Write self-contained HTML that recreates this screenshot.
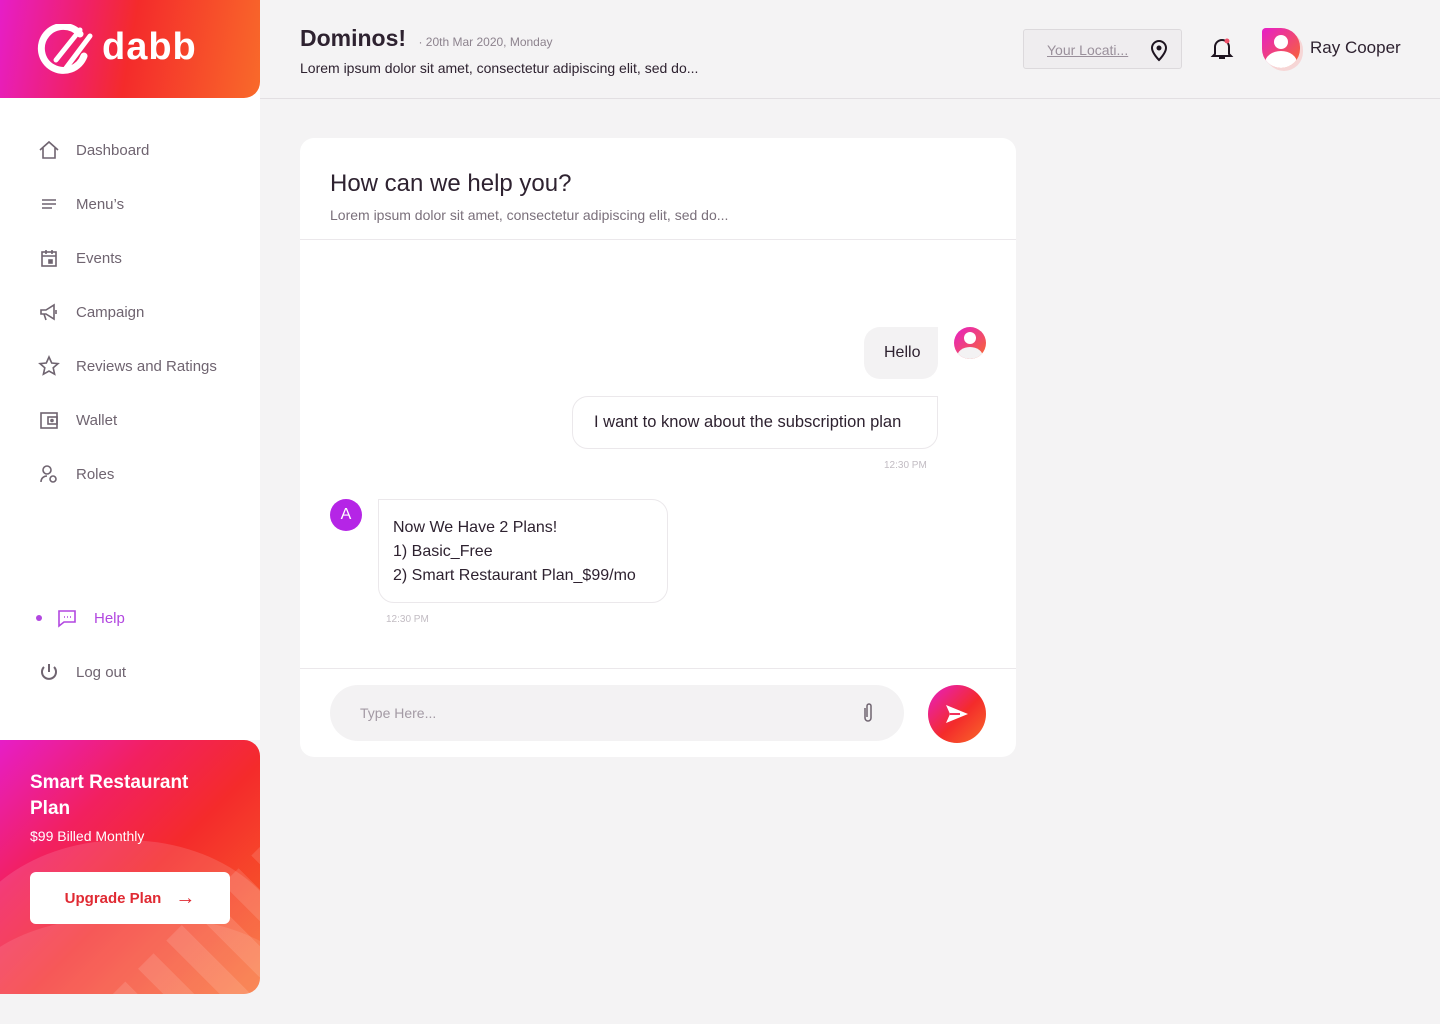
<!DOCTYPE html>
<html><head><meta charset="utf-8"><style>
*{box-sizing:border-box;margin:0;padding:0}
html,body{width:1440px;height:1024px;overflow:hidden}
body{background:#f4f3f4;font-family:"Liberation Sans",sans-serif;position:relative;color:#2e2230}
.side{position:absolute;left:0;top:0;width:260px;height:740px;background:#fff}
.logo{position:absolute;left:0;top:0;width:260px;height:98px;border-radius:0 0 16px 0;background:linear-gradient(100deg,#e61ec8 0%,#f0206c 30%,#f42b2b 50%,#f96a2a 100%)}
.logo span{position:absolute;left:102px;top:26px;color:#fff;font-weight:bold;font-size:38px;letter-spacing:1px}
.nav{position:absolute;left:38px;font-size:15px;color:#6f6470;display:flex;align-items:center}
.nav svg{width:22px;height:22px;margin-right:16px;fill:none;stroke:#6f6470;stroke-width:1.6}
.plan{position:absolute;left:0;top:740px;width:260px;height:254px;border-radius:0 16px 16px 0;overflow:hidden;background:linear-gradient(135deg,#e61ec8 0%,#f22060 30%,#f42b2b 55%,#f96a2a 100%)}
.plan h3{position:absolute;left:30px;top:30px;color:#fff;font-size:19px;line-height:26px;font-weight:bold}
.plan p{position:absolute;left:30px;top:88px;color:#fff;font-size:14px}
.btn{position:absolute;left:30px;top:132px;width:200px;height:52px;background:#fff;border-radius:6px;color:#e02a33;font-weight:bold;font-size:15px;display:flex;align-items:center;justify-content:center}
.hdr{position:absolute;left:260px;top:0;width:1180px;height:99px;border-bottom:1px solid #e2dfe2}
.card{position:absolute;left:300px;top:138px;width:716px;height:619px;background:#fff;border-radius:14px}
.bub{position:absolute;font-size:16px;color:#2e2230}
.ts{position:absolute;font-size:10px;color:#c2bcc3}
</style></head><body>
<div class="side">
 <div class="logo">
  <svg style="position:absolute;left:36px;top:24px" width="58" height="54" viewBox="0 0 58 54"><path d="M44 10A22 22 0 1 0 48 32" fill="none" stroke="#fff" stroke-width="7" stroke-linecap="round"/><path d="M20 36L44 6M30 44L54 12" stroke="#fff" stroke-width="5" stroke-linecap="round"/></svg>
  <span>dabb</span>
 </div>
 <div class="nav" style="top:139px"><svg viewBox="0 0 22 22"><path d="M2 11L11 3l9 8M5 9v10h12V9"/></svg>Dashboard</div>
 <div class="nav" style="top:193px"><svg viewBox="0 0 22 22"><path d="M4 7h14M4 11h14M4 15h10"/></svg>Menu’s</div>
 <div class="nav" style="top:247px"><svg viewBox="0 0 22 22"><rect x="4" y="5" width="14" height="14"/><path d="M4 9h14M8 3v4M14 3v4"/><rect x="11" y="13" width="3" height="3" fill="#6f6470"/></svg>Events</div>
 <div class="nav" style="top:301px"><svg viewBox="0 0 22 22"><path d="M3 9h5l8-5v14l-8-5H3zM6 13l2 6M18 9v4"/></svg>Campaign</div>
 <div class="nav" style="top:355px"><svg viewBox="0 0 22 22"><path d="M11 2l2.7 6 6.3.6-4.8 4.2 1.4 6.4L11 16l-5.6 3.2 1.4-6.4L2 8.6 8.3 8z"/></svg>Reviews and Ratings</div>
 <div class="nav" style="top:409px"><svg viewBox="0 0 22 22"><rect x="3" y="4" width="16" height="15"/><rect x="10" y="8" width="9" height="7"/><circle cx="14" cy="11.5" r="1"/></svg>Wallet</div>
 <div class="nav" style="top:463px"><svg viewBox="0 0 22 22"><circle cx="9" cy="7" r="4"/><path d="M3 19c0-4 3-6 6-6"/><circle cx="15" cy="16" r="3"/></svg>Roles</div>
 <div class="nav" style="top:607px;left:36px;color:#b247e0"><span style="width:6px;height:6px;border-radius:3px;background:#b247e0;margin-right:14px"></span><svg viewBox="0 0 22 22" style="stroke:#b247e0"><path d="M3 4h16v11H8l-5 4z"/><path d="M8 10h1M11 10h1M14 10h1"/></svg>Help</div>
 <div class="nav" style="top:661px"><svg viewBox="0 0 22 22" style="stroke-width:2"><path d="M11 3v8M6 6a7 7 0 1 0 10 0"/></svg>Log out</div>
</div>
<div class="plan">
  <div style="position:absolute;left:-40px;top:100px;width:330px;height:240px;border-radius:50%;background:rgba(255,255,255,.13)"></div>
  <div style="position:absolute;left:-30px;top:175px;width:330px;height:150px;border-radius:50%;background:rgba(255,255,255,.10)"></div>
  <div style="position:absolute;left:100px;top:170px;width:260px;height:160px;transform:rotate(-45deg);background:repeating-linear-gradient(90deg,rgba(255,255,255,.12) 0 22px,transparent 22px 40px)"></div>
  <h3>Smart Restaurant<br>Plan</h3><p>$99 Billed Monthly</p>
  <div class="btn">Upgrade Plan <span style="margin-left:14px;font-size:20px;font-weight:normal">→</span></div>
</div>
<div class="hdr">
 <div style="position:absolute;left:40px;top:25px;font-size:23px;font-weight:bold;color:#2e2230">Dominos! <span style="font-size:12px;font-weight:normal;color:#8d838e;margin-left:6px">· 20th Mar 2020, Monday</span></div>
 <div style="position:absolute;left:40px;top:60px;font-size:14px;color:#2e2230">Lorem ipsum dolor sit amet, consectetur adipiscing elit, sed do...</div>
 <div style="position:absolute;left:763px;top:29px;width:159px;height:40px;background:#efedef;border:1px solid #dcd9dc;border-radius:3px">
  <span style="position:absolute;left:23px;top:12px;font-size:14px;color:#9a909b;text-decoration:underline">Your Locati...</span>
  <svg style="position:absolute;left:124px;top:8px" width="22" height="24" viewBox="0 0 22 24"><path d="M11 22s7-7 7-12a7 7 0 0 0-14 0c0 5 7 12 7 12z" fill="none" stroke="#1e1420" stroke-width="2"/><circle cx="11" cy="10" r="2.5" fill="#1e1420"/></svg>
 </div>
 <svg style="position:absolute;left:950px;top:36px" width="24" height="26" viewBox="0 0 24 26"><path d="M5 18V11a7 7 0 0 1 14 0v7l2 2H3z" fill="none" stroke="#1e1420" stroke-width="2"/><path d="M9 22h6" stroke="#1e1420" stroke-width="2"/><circle cx="17" cy="5" r="2.5" fill="#f0506a"/></svg>
 <div style="position:absolute;left:1002px;top:28px;width:38px;height:40px;border-radius:4px 20px 20px 20px;background:linear-gradient(135deg,#e61ec8,#f96a2a);overflow:hidden;box-shadow:3px 3px 0 #f6d6d6">
  <div style="position:absolute;left:12px;top:7px;width:14px;height:14px;border-radius:50%;background:#fff"></div>
  <div style="position:absolute;left:3px;top:23px;width:32px;height:24px;border-radius:50%;background:#fff"></div>
 </div>
 <div style="position:absolute;left:1050px;top:38px;font-size:17px;color:#2e2230">Ray Cooper</div>
</div>
<div class="card">
 <div style="position:absolute;left:30px;top:32px;font-size:24px;color:#2e2230">How can we help you?</div>
 <div style="position:absolute;left:30px;top:69px;font-size:14px;color:#7a707b">Lorem ipsum dolor sit amet, consectetur adipiscing elit, sed do...</div>
 <div style="position:absolute;left:0;width:716px;top:101px;border-top:1px solid #ebe8eb"></div>
 <div class="bub" style="left:564px;top:189px;width:74px;height:52px;background:#f3f2f3;border-radius:16px 0 16px 16px;padding:17px 0 0 20px">Hello</div>
 <div style="position:absolute;left:654px;top:189px;width:32px;height:32px;border-radius:50%;background:linear-gradient(135deg,#e61ec8,#f96a2a);overflow:hidden">
  <div style="position:absolute;left:10px;top:5px;width:12px;height:12px;border-radius:50%;background:#fff"></div>
  <div style="position:absolute;left:3px;top:20px;width:26px;height:20px;border-radius:50%;background:#f3f2f3"></div>
 </div>
 <div class="bub" style="left:272px;top:258px;width:366px;height:53px;border:1px solid #ebe8eb;border-radius:16px 0 16px 16px;padding:16px 0 0 21px;font-size:16.5px">I want to know about the subscription plan</div>
 <div class="ts" style="left:584px;top:322px">12:30 PM</div>
 <div style="position:absolute;left:30px;top:361px;width:32px;height:32px;border-radius:50%;background:#b525e6;color:#fff;font-size:16px;text-align:center;line-height:32px">A</div>
 <div class="bub" style="left:78px;top:361px;width:290px;height:104px;border:1px solid #ebe8eb;border-radius:0 16px 16px 16px;padding:16px 0 0 14px;line-height:24px">Now We Have 2 Plans!<br>1) Basic_Free<br>2) Smart Restaurant Plan_$99/mo</div>
 <div class="ts" style="left:86px;top:476px">12:30 PM</div>
 <div style="position:absolute;left:0;width:716px;top:530px;border-top:1px solid #ebe8eb"></div>
 <div style="position:absolute;left:30px;top:547px;width:574px;height:56px;border-radius:28px;background:#f3f2f3">
  <span style="position:absolute;left:30px;top:20px;font-size:14px;color:#a39aa4">Type Here...</span>
  <svg style="position:absolute;left:530px;top:16px" width="16" height="24" viewBox="0 0 16 24"><path d="M5 7v10a3 3 0 0 0 6 0V5a2 2 0 0 0-4 0v11" fill="none" stroke="#6f6470" stroke-width="1.5"/></svg>
 </div>
 <div style="position:absolute;left:628px;top:547px;width:58px;height:58px;border-radius:50%;background:linear-gradient(135deg,#e61ec8,#f42b2b 55%,#f96a2a)">
  <svg style="position:absolute;left:17px;top:19px" width="24" height="20" viewBox="0 0 24 20"><path d="M1 1l22 9-22 9 4-9z" fill="#fff"/><path d="M5 10h10" stroke="#f2305a" stroke-width="2"/></svg>
 </div>
</div>
</body></html>
